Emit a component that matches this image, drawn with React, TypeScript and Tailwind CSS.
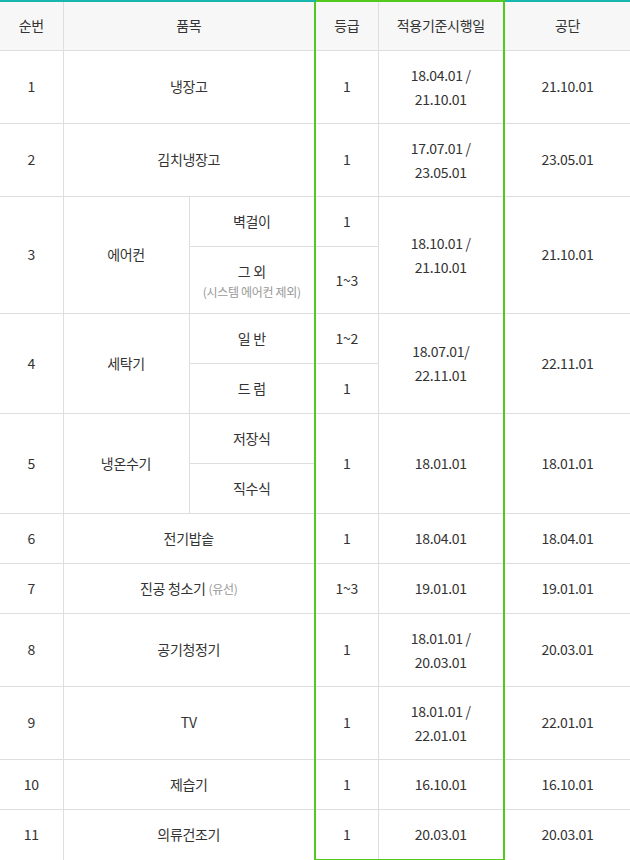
import React from "react";

const G = "border-l-2 border-l-[#52c91d]";
const GR = "border-r-2 border-r-[#52c91d]";
const cell = "border border-[#dedede] text-center align-middle p-0";

type Simple = { no: string; name: React.ReactNode; grade: string; date: string[]; kong: string; h: string };

const simple: Simple[] = [
  { no: "1", name: "냉장고", grade: "1", date: ["18.04.01 /", "21.10.01"], kong: "21.10.01", h: "h-[73px]" },
  { no: "2", name: "김치냉장고", grade: "1", date: ["17.07.01 /", "23.05.01"], kong: "23.05.01", h: "h-[73px]" },
];

const tail: Simple[] = [
  { no: "6", name: "전기밥솥", grade: "1", date: ["18.04.01"], kong: "18.04.01", h: "h-[50px]" },
  {
    no: "7",
    name: (
      <>
        진공 청소기 <span className="text-[12px] text-[#999]">(유선)</span>
      </>
    ),
    grade: "1~3",
    date: ["19.01.01"],
    kong: "19.01.01",
    h: "h-[50px]",
  },
  { no: "8", name: "공기청정기", grade: "1", date: ["18.01.01 /", "20.03.01"], kong: "20.03.01", h: "h-[73px]" },
  { no: "9", name: "TV", grade: "1", date: ["18.01.01 /", "22.01.01"], kong: "22.01.01", h: "h-[73px]" },
  { no: "10", name: "제습기", grade: "1", date: ["16.10.01"], kong: "16.10.01", h: "h-[50px]" },
  { no: "11", name: "의류건조기", grade: "1", date: ["20.03.01"], kong: "20.03.01", h: "h-[51px]" },
];

function Dates({ d }: { d: string[] }) {
  return (
    <div className="leading-[24px]">
      {d.map((x) => (
        <div key={x}>{x}</div>
      ))}
    </div>
  );
}

function Row({ r, last }: { r: Simple; last?: boolean }) {
  const b = last ? "border-b-2 border-b-[#52c91d]" : "";
  return (
    <tr className={r.h}>
      <td className={`${cell} border-l-0`}>{r.no}</td>
      <td className={cell} colSpan={2}>
        {r.name}
      </td>
      <td className={`${cell} ${G} ${b}`}>{r.grade}</td>
      <td className={`${cell} ${GR} ${b}`}>
        <Dates d={r.date} />
      </td>
      <td className={`${cell} border-r-0`}>{r.kong}</td>
    </tr>
  );
}

export default function App() {
  return (
    <div className="w-[630px] h-[860px] bg-white text-[14px] text-[#333] tracking-[-0.3px] font-['Noto_Sans_CJK_KR','Noto_Sans',sans-serif]">
      <table className="w-[630px] table-fixed border-collapse">
        <colgroup>
          <col className="w-[63px]" />
          <col className="w-[126px]" />
          <col className="w-[126px]" />
          <col className="w-[63px]" />
          <col className="w-[126px]" />
          <col className="w-[126px]" />
        </colgroup>
        <thead>
          <tr className="h-[49px] bg-[#f7f7f7]">
            <th className={`${cell} border-l-0 border-t-2 border-t-[#17b6ae] font-normal`}>순번</th>
            <th className={`${cell} border-t-2 border-t-[#17b6ae] font-normal`} colSpan={2}>
              품목
            </th>
            <th className={`${cell} ${G} border-t-2 border-t-[#52c91d] font-normal`}>등급</th>
            <th className={`${cell} ${GR} border-t-2 border-t-[#52c91d] font-normal`}>적용기준시행일</th>
            <th className={`${cell} border-r-0 border-t-2 border-t-[#17b6ae] font-normal`}>공단</th>
          </tr>
        </thead>
        <tbody>
          {simple.map((r) => (
            <Row key={r.no} r={r} />
          ))}

          {/* 3 에어컨 */}
          <tr className="h-[50px]">
            <td className={`${cell} border-l-0`} rowSpan={2}>3</td>
            <td className={cell} rowSpan={2}>에어컨</td>
            <td className={cell}>벽걸이</td>
            <td className={`${cell} ${G}`}>1</td>
            <td className={`${cell} ${GR}`} rowSpan={2}>
              <Dates d={["18.10.01 /", "21.10.01"]} />
            </td>
            <td className={`${cell} border-r-0`} rowSpan={2}>21.10.01</td>
          </tr>
          <tr className="h-[67px]">
            <td className={cell}>
              <div className="pt-[4px] leading-[20px]">그 외</div>
              <div className="text-[12px] leading-[22px] text-[#999]">(시스템 에어컨 제외)</div>
            </td>
            <td className={`${cell} ${G}`}>
              <div className="pt-[2px]">1~3</div>
            </td>
          </tr>

          {/* 4 세탁기 */}
          <tr className="h-[50px]">
            <td className={`${cell} border-l-0`} rowSpan={2}>4</td>
            <td className={cell} rowSpan={2}>세탁기</td>
            <td className={cell}>일 반</td>
            <td className={`${cell} ${G}`}>1~2</td>
            <td className={`${cell} ${GR}`} rowSpan={2}>
              <Dates d={["18.07.01/", "22.11.01"]} />
            </td>
            <td className={`${cell} border-r-0`} rowSpan={2}>22.11.01</td>
          </tr>
          <tr className="h-[50px]">
            <td className={cell}>드 럼</td>
            <td className={`${cell} ${G}`}>1</td>
          </tr>

          {/* 5 냉온수기 */}
          <tr className="h-[50px]">
            <td className={`${cell} border-l-0`} rowSpan={2}>5</td>
            <td className={cell} rowSpan={2}>냉온수기</td>
            <td className={cell}>저장식</td>
            <td className={`${cell} ${G}`} rowSpan={2}>1</td>
            <td className={`${cell} ${GR}`} rowSpan={2}>18.01.01</td>
            <td className={`${cell} border-r-0`} rowSpan={2}>18.01.01</td>
          </tr>
          <tr className="h-[50px]">
            <td className={cell}>직수식</td>
          </tr>

          {tail.map((r, i) => (
            <Row key={r.no} r={r} last={i === tail.length - 1} />
          ))}
        </tbody>
      </table>
    </div>
  );
}
